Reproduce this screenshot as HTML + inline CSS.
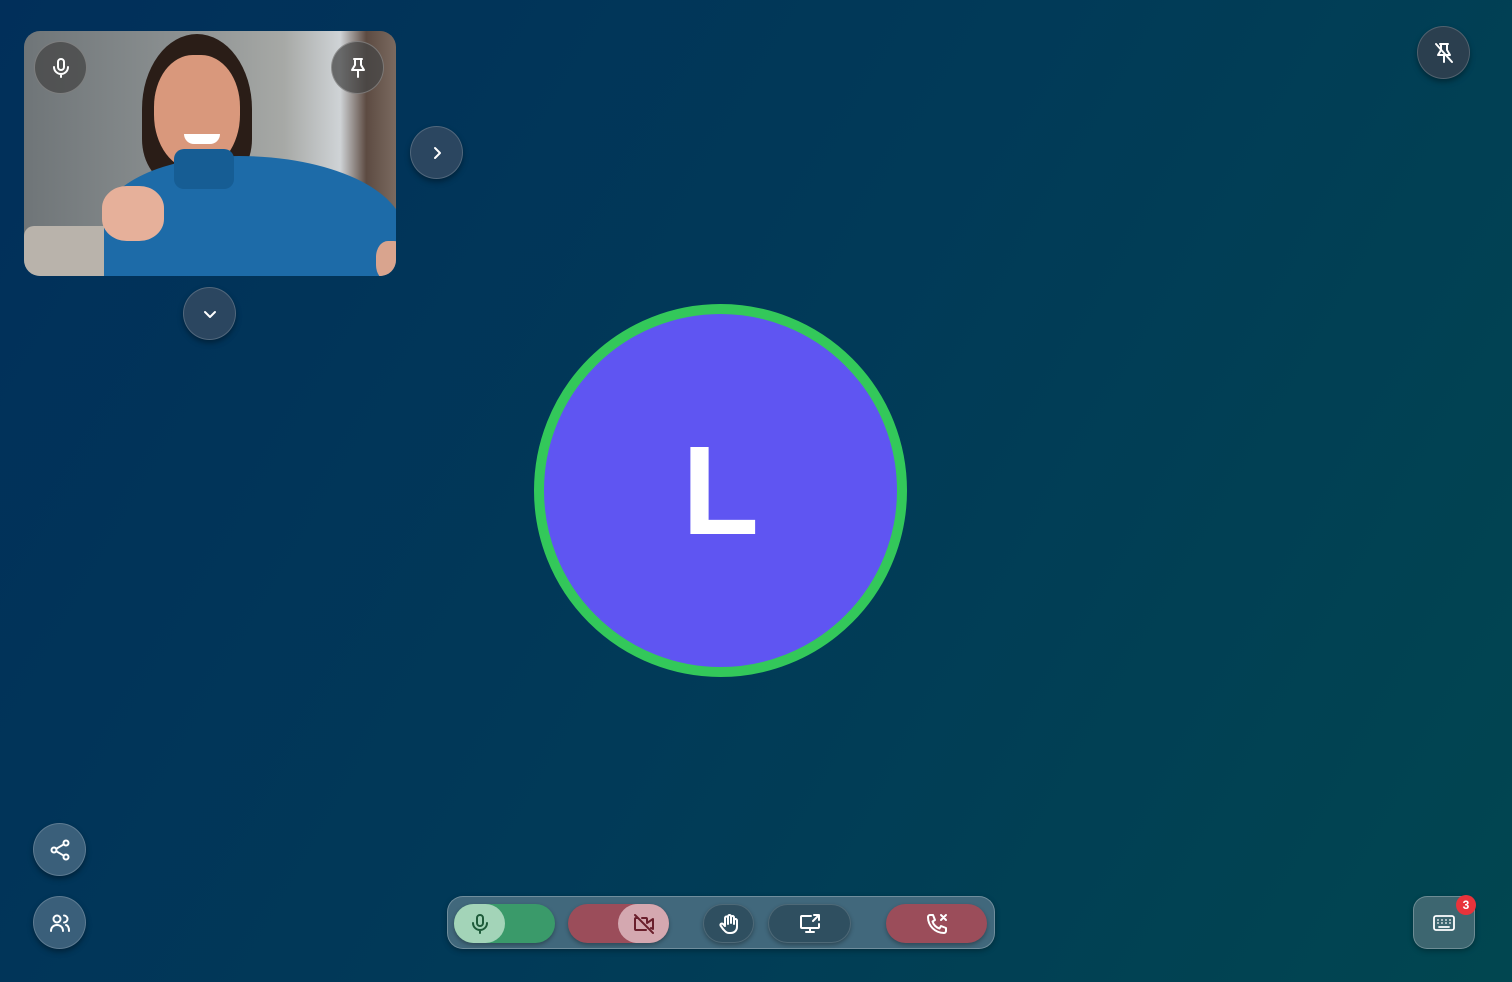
<!DOCTYPE html>
<html><head><meta charset="utf-8"><style>
*{margin:0;padding:0;box-sizing:border-box}
body{width:1512px;height:982px;overflow:hidden;font-family:"Liberation Sans",sans-serif;background:linear-gradient(120deg,#012f5a 0%,#013a58 50%,#014650 100%);position:relative}
.btn{position:absolute;width:53px;height:53px;border-radius:50%;background:#2b4660;border:1px solid rgba(255,255,255,.18);box-shadow:0 3px 6px rgba(0,0,0,.35);display:flex;align-items:center;justify-content:center}
.btn svg{width:24px;height:24px;fill:none;stroke:#fff;stroke-width:2;stroke-linecap:round;stroke-linejoin:round}
.photo{position:absolute;left:24px;top:31px;width:372px;height:245px;border-radius:16px;overflow:hidden;background:linear-gradient(90deg,#6f7578 0%,#8a8f90 40%,#a7a9a6 70%,#cfd3d6 85%,#5d4b42 92%,#7a6a60 100%)}
.photo div{position:absolute}
.gbtn{position:absolute;width:53px;height:53px;border-radius:50%;background:rgba(70,70,70,.75);border:1px solid rgba(255,255,255,.25);display:flex;align-items:center;justify-content:center}
.gbtn svg{width:24px;height:24px;fill:none;stroke:#fff;stroke-width:2;stroke-linecap:round;stroke-linejoin:round}
.bar{position:absolute;left:447px;top:896px;width:548px;height:53px;border-radius:16px;background:#41687c;border:1px solid rgba(255,255,255,.25);box-shadow:0 2px 6px rgba(0,0,0,.3)}
.pill{position:absolute;top:7px;height:39px;border-radius:20px;display:flex;align-items:center;justify-content:center;box-shadow:0 2px 4px rgba(0,0,0,.3)}
.pill svg{width:24px;height:24px;fill:none;stroke-width:2;stroke-linecap:round;stroke-linejoin:round}
</style></head><body>

<div class="photo">
  <div style="left:0;top:195px;width:130px;height:60px;background:#b9b3ab;border-radius:10px"></div>
  <div style="left:118px;top:3px;width:110px;height:150px;background:#2a1d17;border-radius:50% 50% 30% 30%"></div>
  <div style="left:130px;top:24px;width:86px;height:115px;background:#d9987c;border-radius:45% 45% 48% 48%"></div>
  <div style="left:160px;top:103px;width:36px;height:10px;background:#fff;border-radius:0 0 20px 20px"></div>
  <div style="left:80px;top:125px;width:300px;height:140px;background:#1d6ba8;border-radius:45% 55% 0 0"></div>
  <div style="left:150px;top:118px;width:60px;height:40px;background:#165d94;border-radius:10px"></div>
  <div style="left:78px;top:155px;width:62px;height:55px;background:#e6b09a;border-radius:40%"></div>
  <div style="left:352px;top:210px;width:30px;height:40px;background:#d9a48e;border-radius:40%"></div>
</div>
<div class="gbtn" style="left:34px;top:41px"><svg viewBox="0 0 24 24"><rect x="9" y="3" width="6" height="11" rx="3"/><path d="M5 11a7 7 0 0 0 14 0M12 18v3"/></svg></div>
<div class="gbtn" style="left:331px;top:41px"><svg viewBox="0 0 24 24"><path d="M8 3h8M9 3v6l-3 5h12l-3-5V3M12 14v7"/></svg></div>

<div class="btn" style="left:410px;top:126px"><svg viewBox="0 0 24 24"><path d="M10 7l5 5-5 5"/></svg></div>
<div class="btn" style="left:183px;top:287px"><svg viewBox="0 0 24 24"><path d="M7 10l5 5 5-5"/></svg></div>
<div class="btn" style="left:1417px;top:26px;background:#2b3f4f"><svg viewBox="0 0 24 24"><path d="M8 3h8M9 3v6l-3 5h12l-3-5V3M12 14v7M4 3l16 18"/></svg></div>

<div style="position:absolute;left:534px;top:304px;width:373px;height:373px;border-radius:50%;background:#5f55f2;border:10px solid #33c85a;display:flex;align-items:center;justify-content:center;color:#fff;font-weight:bold;font-size:126px">L</div>

<div class="btn" style="left:33px;top:823px;background:#3a5f7a"><svg viewBox="0 0 24 24"><circle cx="18" cy="5" r="2.5"/><circle cx="6" cy="12" r="2.5"/><circle cx="18" cy="19" r="2.5"/><path d="M8.2 10.8l7.6-4.5M8.2 13.2l7.6 4.5"/></svg></div>
<div class="btn" style="left:33px;top:896px;background:#3a5f7a"><svg viewBox="0 0 24 24"><circle cx="9" cy="8" r="3.5"/><path d="M3 20c0-4 3-6 6-6s6 2 6 6M16 4.5a3.5 3.5 0 0 1 0 7M18 14c2 .5 3 2.5 3 6"/></svg></div>

<div class="bar">
  <div class="pill" style="left:6px;width:101px;background:#3a9a6a"><div style="position:absolute;left:0;top:0;width:51px;height:39px;border-radius:20px;background:#a3d4b8;display:flex;align-items:center;justify-content:center"><svg viewBox="0 0 24 24" style="stroke:#1e5b3a"><rect x="9" y="3" width="6" height="11" rx="3"/><path d="M5 11a7 7 0 0 0 14 0M12 18v3"/></svg></div></div>
  <div class="pill" style="left:120px;width:101px;background:#9b4d5a"><div style="position:absolute;left:50px;top:0;width:51px;height:39px;border-radius:20px;background:#d4a8b0;display:flex;align-items:center;justify-content:center"><svg viewBox="0 0 24 24" style="stroke:#6a1f2c"><path d="M3 3l18 18M15 11l6-4v10l-2-1M14 18H4a1 1 0 0 1-1-1V7a1 1 0 0 1 1-1h2M10 6h4a1 1 0 0 1 1 1v3"/></svg></div></div>
  <div class="pill" style="left:255px;width:51px;background:#2f4f60;border:1px solid rgba(255,255,255,.15)"><svg viewBox="0 0 24 24" style="stroke:#fff"><path d="M8 13V6a1.5 1.5 0 0 1 3 0v6M11 11V4.5a1.5 1.5 0 0 1 3 0V11M14 11V5.5a1.5 1.5 0 0 1 3 0V12M17 8.5a1.5 1.5 0 0 1 3 0V15a6 6 0 0 1-6 6h-2c-3 0-4-2-6-4l-2.5-3.5a1.5 1.5 0 0 1 2.5-1.5L8 14"/></svg></div>
  <div class="pill" style="left:320px;width:83px;background:#2f4f60;border:1px solid rgba(255,255,255,.15)"><svg viewBox="0 0 24 24" style="stroke:#fff"><path d="M13 4H4a1 1 0 0 0-1 1v10a1 1 0 0 0 1 1h16a1 1 0 0 0 1-1v-3M8 20h8M12 16v4M16 3h5v5M21 3l-6 6"/></svg></div>
  <div class="pill" style="left:438px;width:101px;background:#9b4d5a"><svg viewBox="0 0 24 24" style="stroke:#fff"><path d="M16 3l5 5M21 3l-5 5M5 3h3l2 5-2.5 1.5a11 11 0 0 0 7 7L16 14l5 2v3a2 2 0 0 1-2 2A16 16 0 0 1 3 5a2 2 0 0 1 2-2"/></svg></div>
</div>

<div style="position:absolute;left:1413px;top:896px;width:62px;height:53px;border-radius:14px;background:#3d6670;border:1px solid rgba(255,255,255,.25);box-shadow:0 2px 6px rgba(0,0,0,.3);display:flex;align-items:center;justify-content:center"><svg viewBox="0 0 24 24" style="width:24px;height:24px;fill:none;stroke:#fff;stroke-width:1.8;stroke-linecap:round"><rect x="2" y="5" width="20" height="14" rx="2"/><path d="M6 9h0M10 9h0M14 9h0M18 9h0M6 12h0M10 12h0M14 12h0M18 12h0M7 16h10"/></svg></div>
<div style="position:absolute;left:1456px;top:895px;width:20px;height:20px;border-radius:50%;background:#e8333b;color:#fff;font-size:12px;font-weight:bold;display:flex;align-items:center;justify-content:center">3</div>

</body></html>
